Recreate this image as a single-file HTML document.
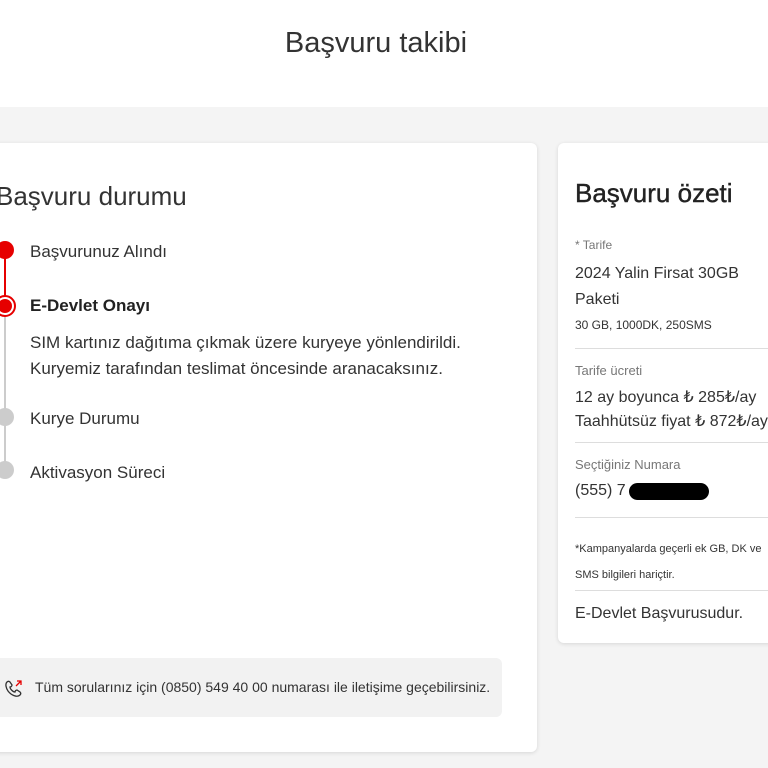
<!DOCTYPE html>
<html><head><meta charset="utf-8"><style>
*{margin:0;padding:0;box-sizing:border-box}
body{width:768px;height:768px;overflow:hidden;background:#f4f4f4;font-family:"Liberation Sans",sans-serif;color:#333;position:relative}
.hdr{position:absolute;left:0;top:0;width:768px;height:107px;background:#fff}
.hdr h1{position:absolute;top:27px;left:0;width:752px;text-align:center;font-weight:normal;font-size:29px;color:#333}
.card{position:absolute;background:#fff;border-radius:6px;box-shadow:0 1px 4px rgba(0,0,0,.12)}
.t{position:absolute;white-space:nowrap}
.dot{position:absolute;border-radius:50%}
.hr{position:absolute;left:17px;right:0;height:1px;background:#ddd}
</style></head><body>
<div class="hdr"><h1>Başvuru takibi</h1></div>
<div class="card" style="left:-10px;top:143px;width:547px;height:609px"></div>
<div class="t" style="left:-4px;top:181px;font-size:26px;color:#333">Başvuru durumu</div>
<div style="position:absolute;left:4px;top:250px;width:2px;height:56px;background:#e60000"></div>
<div style="position:absolute;left:4px;top:306px;width:2px;height:166px;background:#ccc"></div>
<div class="dot" style="left:-4px;top:241px;width:18px;height:18px;background:#e60000"></div>
<div class="dot" style="left:-6px;top:295px;width:22px;height:22px;background:#fff;border:2px solid #e60000"></div>
<div class="dot" style="left:-2px;top:299px;width:14px;height:14px;background:#e60000"></div>
<div class="dot" style="left:-4px;top:408px;width:18px;height:18px;background:#ccc"></div>
<div class="dot" style="left:-4px;top:461px;width:18px;height:18px;background:#ccc"></div>
<div class="t" style="left:30px;top:242px;font-size:17px">Başvurunuz Alındı</div>
<div class="t" style="left:30px;top:296px;font-size:17px;font-weight:bold;color:#222">E-Devlet Onayı</div>
<div class="t" style="left:30px;top:330px;font-size:17px;line-height:26px">SIM kartınız dağıtıma çıkmak üzere kuryeye yönlendirildi.<br>Kuryemiz tarafından teslimat öncesinde aranacaksınız.</div>
<div class="t" style="left:30px;top:409px;font-size:17px">Kurye Durumu</div>
<div class="t" style="left:30px;top:463px;font-size:17px">Aktivasyon Süreci</div>
<div style="position:absolute;left:-10px;top:658px;width:512px;height:59px;background:#f2f2f2;border-radius:6px"></div>
<svg style="position:absolute;left:4px;top:678px" width="20" height="20" viewBox="0 0 20 20" fill="none" stroke="#333" stroke-width="1.3"><path d="M3 4c1-1 2-1 3 0l2 3c0 1-1 2-2 2 0 2 3 5 5 5 0-1 1-2 2-2l3 2c1 1 1 2 0 3-3 3-9 0-12-4-2-3-3-7-1-9z"/><path d="M12 8l5-5M13 3h4v4" stroke="#e60000"/></svg>
<div class="t" style="left:35px;top:679px;font-size:14px">Tüm sorularınız için (0850) 549 40 00 numarası ile iletişime geçebilirsiniz.</div>
<div class="card" style="left:558px;top:143px;width:230px;height:500px"></div>
<div class="t" style="left:575px;top:178px;font-size:26px;color:#222;-webkit-text-stroke:0.4px #222">Başvuru özeti</div>
<div class="t" style="left:575px;top:238px;font-size:12px;color:#777">* Tarife</div>
<div class="t" style="left:575px;top:261px;font-size:16px;line-height:26px">2024 Yalin Firsat 30GB<br>Paketi</div>
<div class="t" style="left:575px;top:318px;font-size:12px">30 GB, 1000DK, 250SMS</div>
<div class="hr" style="left:575px;top:348px"></div>
<div class="t" style="left:575px;top:363px;font-size:13px;color:#777">Tarife ücreti</div>
<div class="t" style="left:575px;top:386px;font-size:16px;line-height:24px">12 ay boyunca ₺ 285₺/ay<br>Taahhütsüz fiyat ₺ 872₺/ay</div>
<div class="hr" style="left:575px;top:442px"></div>
<div class="t" style="left:575px;top:457px;font-size:13px;color:#777">Seçtiğiniz Numara</div>
<div class="t" style="left:575px;top:482px;font-size:16px">(555) 7</div>
<div style="position:absolute;left:629px;top:483px;width:80px;height:17px;border-radius:9px;background:#000"></div>
<div class="hr" style="left:575px;top:517px"></div>
<div class="t" style="left:575px;top:536px;font-size:11px;line-height:26px">*Kampanyalarda geçerli ek GB, DK ve<br>SMS bilgileri hariçtir.</div>
<div class="hr" style="left:575px;top:590px"></div>
<div class="t" style="left:575px;top:605px;font-size:16px">E-Devlet Başvurusudur.</div>
</body></html>
